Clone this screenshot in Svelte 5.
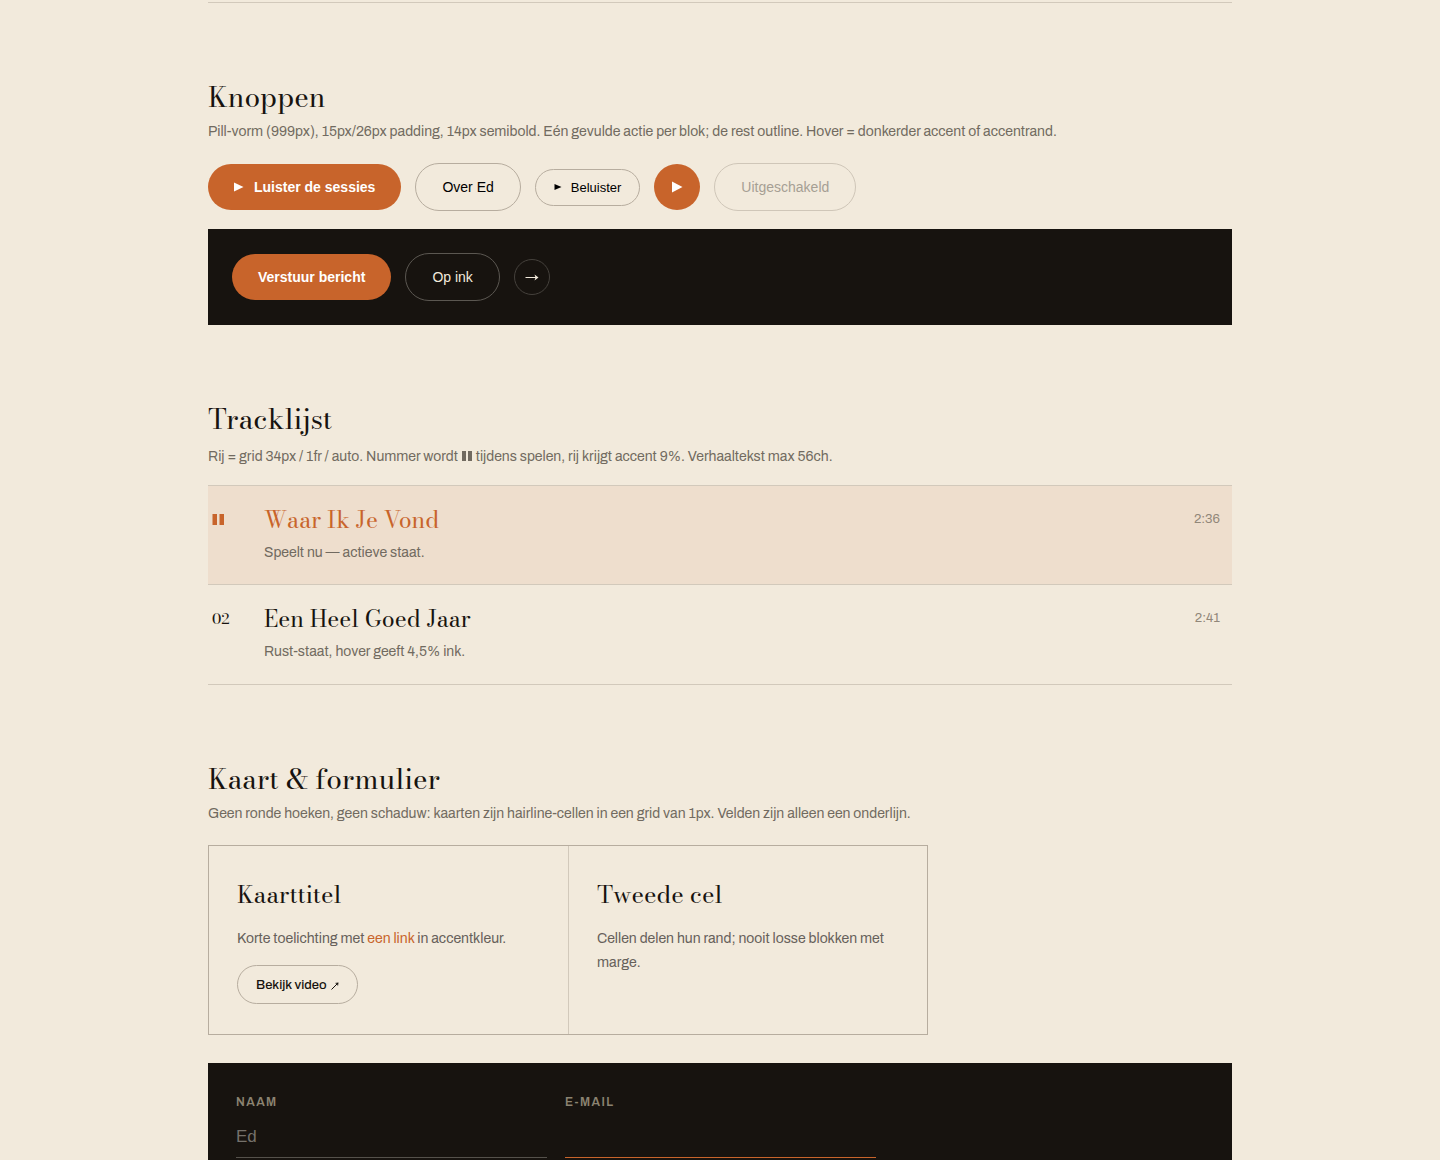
<script>
  let naam  = '';
  let email = '';
  let actief = '01';

  const tracks = [
    { nr: '01', titel: 'Waar Ik Je Vond',    verhaal: 'Speelt nu — actieve staat.',     duur: '2:36' },
    { nr: '02', titel: 'Een Heel Goed Jaar', verhaal: 'Rust-staat, hover geeft 4,5% ink.', duur: '2:41' },
  ];
</script>

<main>
  <hr />

  <section>
    <h2>Knoppen</h2>
    <p class="lead">Pill-vorm (999px), 15px/26px padding, 14px semibold. Eén gevulde actie per blok; de rest outline. Hover = donkerder accent of accentrand.</p>

    <div class="row">
      <button class="btn btn-fill">
        <svg class="play" viewBox="0 0 10 10" aria-hidden="true"><path d="M0 0.5 9.5 5 0 9.5z" /></svg>
        Luister de sessies
      </button>
      <button class="btn btn-line">Over Ed</button>
      <button class="btn btn-line btn-small">
        <svg class="play-small" viewBox="0 0 8 8" aria-hidden="true"><path d="M0.5 1 7.5 4 0.5 7z" /></svg>
        Beluister
      </button>
      <button class="btn btn-fill round" aria-label="Speel af">
        <svg class="play-round" viewBox="0 0 12 12" aria-hidden="true"><path d="M1 0.5 11.5 6 1 11.5z" /></svg>
      </button>
      <button class="btn btn-line" disabled>Uitgeschakeld</button>
    </div>

    <div class="row ink">
      <button class="btn btn-fill">Verstuur bericht</button>
      <button class="btn btn-line">Op ink</button>
      <button class="btn btn-line round-small" aria-label="Volgende">
        <svg class="arrow" viewBox="0 0 14 8" aria-hidden="true"><path d="M0.5 4.5H11" /><path class="head" d="M9.5 1.5 13.5 4.5 9.5 7.5 10.5 4.5z" /></svg>
      </button>
    </div>
  </section>

  <section>
    <h2>Tracklijst</h2>
    <p class="lead tight">Rij = grid 34px / 1fr / auto. Nummer wordt <svg class="pause" viewBox="0 0 12 11" aria-hidden="true"><path d="M1 0h4v10H1zM7 0h4v10H7z" /></svg> tijdens spelen, rij krijgt accent 9%. Verhaaltekst max 56ch.</p>

    <ol class="tracks">
      {#each tracks as track}
        <li class:actief={track.nr === actief}>
          <span class="nr">
            {#if track.nr === actief}
              <svg class="pause" viewBox="0 0 12 11" aria-hidden="true"><path d="M0.5 0H5v11H0.5zM7.5 0H12v11H7.5z" /></svg>
            {:else}
              {track.nr}
            {/if}
          </span>
          <div>
            <h3>{track.titel}</h3>
            <p>{track.verhaal}</p>
          </div>
          <span class="duur">{track.duur}</span>
        </li>
      {/each}
    </ol>
  </section>

  <section>
    <h2>Kaart &amp; formulier</h2>
    <p class="lead">Geen ronde hoeken, geen schaduw: kaarten zijn hairline-cellen in een grid van 1px. Velden zijn alleen een onderlijn.</p>

    <div class="cards">
      <article>
        <h3>Kaarttitel</h3>
        <p>Korte toelichting met <a href="#link">een link</a> in accentkleur.</p>
        <a href="#video" class="video">
          Bekijk video
          <svg viewBox="0 0 8 8" aria-hidden="true"><path d="M0.5 7.5 6.5 1.5" /><path class="head" d="M3.8 1 7.5 0.5 7 4.2 6 2z" /></svg>
        </a>
      </article>
      <article>
        <h3>Tweede cel</h3>
        <p>Cellen delen hun rand; nooit losse blokken met marge.</p>
      </article>
    </div>

    <form class="ink-form">
      <div class="fields">
        <div class="field">
          <label for="naam">Naam</label>
          <input id="naam" type="text" placeholder="Ed" bind:value={naam} />
        </div>
        <div class="field focus">
          <label for="email">E-mail</label>
          <input id="email" type="email" bind:value={email} />
        </div>
      </div>
    </form>
  </section>
</main>

<style>
:global(body) {
  --paper: #f2eadc;
  --ink: #17130f;
  --accent: #c8642b;
  --muted: #716a60;
  --line: #d2c9bb;
  --line-strong: #b7ad9f;
  --f-display: 'Bodoni Moda', 'Liberation Serif', serif;
  --f-body: 'Archivo', 'Liberation Sans', sans-serif;
  background: var(--paper);
  color: var(--ink);
  font-family: var(--f-body);
  font-size: 14px;
  line-height: 24px;
}

main {
  max-width: 1024px;
  margin: 0 auto;
  padding: 2px 24px 0;
}

hr {
  margin: 0;
  border: 0;
  border-top: 1px solid var(--line);
}

section { padding-top: 75px; }

h2, h3, p { margin: 0; }

h2, h3 {
  font-family: var(--f-display);
  font-weight: 400;
}
h2 {
  font-size: 28px;
  line-height: 38px;
}
h3 {
  font-size: 23px;
  line-height: 32px;
}

p { color: var(--muted); }
.lead { margin: 4px 0 19px; }
.tight { margin-bottom: 16px; }

svg { fill: currentColor; flex-shrink: 0; }

/* Knoppen */
.row {
  display: flex;
  flex-wrap: wrap;
  align-items: center;
  gap: 14px;
}
.btn {
  display: inline-flex;
  align-items: center;
  justify-content: center;
  gap: 10px;
  padding: 15px 26px;
  border: 0;
  border-radius: 999px;
  background: transparent;
  color: #000;
  font-family: 'Liberation Sans', Arial, sans-serif;
  font-size: 14px;
  line-height: 16px;
  cursor: pointer;
}
.btn-fill {
  background: var(--accent);
  color: #fff;
  font-weight: 700;
}
.btn-fill:hover { background: #a94f1d; }
.btn-line { border: 1px solid var(--line-strong); }
.btn-line:hover { border-color: var(--accent); }
.btn-small {
  gap: 9px;
  padding: 10px 18px;
  font-size: 13px;
  line-height: 15px;
}
.round {
  width: 46px;
  height: 46px;
  padding: 0;
}
.round-small {
  width: 36px;
  height: 36px;
  padding: 0;
}
.btn:disabled {
  border-color: #cfc6b8;
  color: #a69f94;
  cursor: default;
}

.play { width: 10px; height: 10px; }
.play-small { width: 8px; height: 8px; }
.play-round { width: 12px; height: 12px; }

.ink {
  margin-top: 18px;
  padding: 24px;
  background: var(--ink);
}
.ink .btn-line {
  border-color: #5b5751;
  color: var(--paper);
}
.ink .round-small { border-color: #45413c; }
.arrow {
  width: 14px;
  height: 8px;
  stroke: currentColor;
}
.head { stroke: none; }

/* Tracklijst */
.pause {
  width: 12px;
  height: 11px;
  vertical-align: -1px;
}
.lead .pause { margin-top: 9px; }
.nr .pause { vertical-align: baseline; }
.tracks {
  margin: 0;
  padding: 0;
  border-top: 1px solid var(--line);
  list-style: none;
}
.tracks li {
  display: grid;
  grid-template-columns: 34px 1fr auto;
  gap: 18px;
  padding: 18px 12px 19px 4px;
  border-bottom: 1px solid var(--line);
}
.tracks li:last-child { padding-bottom: 20px; }
.tracks li:hover { background: rgba(23,19,15,0.045); }
.tracks li.actief { background: #eedecd; }
.tracks p {
  max-width: 56ch;
  margin-top: 5px;
}
.nr {
  font-family: var(--f-display);
  font-size: 15px;
  line-height: 32px;
}
.actief .nr, .actief h3 { color: var(--accent); }
.duur {
  color: #918779;
  font-size: 13px;
  line-height: 30px;
}

/* Kaarten */
.cards {
  display: grid;
  grid-template-columns: 1fr 1fr;
  max-width: 718px;
  border: 1px solid var(--line-strong);
}
article { padding: 30px 28px; }
article + article { border-left: 1px solid var(--line); }
article h3 {
  font-size: 24px;
  line-height: 38px;
}
article p {
  margin-top: 13px;
  color: #66605a;
}
article p a {
  color: var(--accent);
  text-decoration: none;
}
.video {
  display: inline-flex;
  align-items: center;
  gap: 4px;
  margin-top: 14px;
  padding: 9px 18px 7px;
  border: 1px solid var(--line-strong);
  border-radius: 999px;
  color: var(--ink);
  font-size: 13px;
  font-weight: 500;
  line-height: 21px;
  text-decoration: none;
  vertical-align: top;
}
.video:hover { border-color: var(--accent); }
.video svg {
  width: 8px;
  height: 8px;
  stroke: currentColor;
}

/* Formulier */
.ink-form {
  margin-top: 28px;
  padding: 28px;
  background: var(--ink);
}
.fields {
  display: grid;
  grid-template-columns: 1fr 1fr;
  gap: 18px;
  max-width: 640px;
}
.field {
  display: flex;
  flex-direction: column;
}
label {
  color: #8b8371;
  font-size: 12px;
  font-weight: 600;
  letter-spacing: 0.12em;
  line-height: 22px;
  text-transform: uppercase;
}
input {
  height: 45px;
  padding: 4px 0 0;
  border: 0;
  border-bottom: 1px solid #55514b;
  border-radius: 0;
  outline: 0;
  box-sizing: border-box;
  background: transparent;
  color: var(--paper);
  font-family: 'Liberation Sans', Arial, sans-serif;
  font-size: 17px;
}
input::placeholder { color: #75716b; }
input:focus, .focus input { border-color: var(--accent); }

@media (max-width: 640px) {
  .cards, .fields { grid-template-columns: 1fr; }
  article + article { border-left: 0; border-top: 1px solid var(--line); }
}
</style>
